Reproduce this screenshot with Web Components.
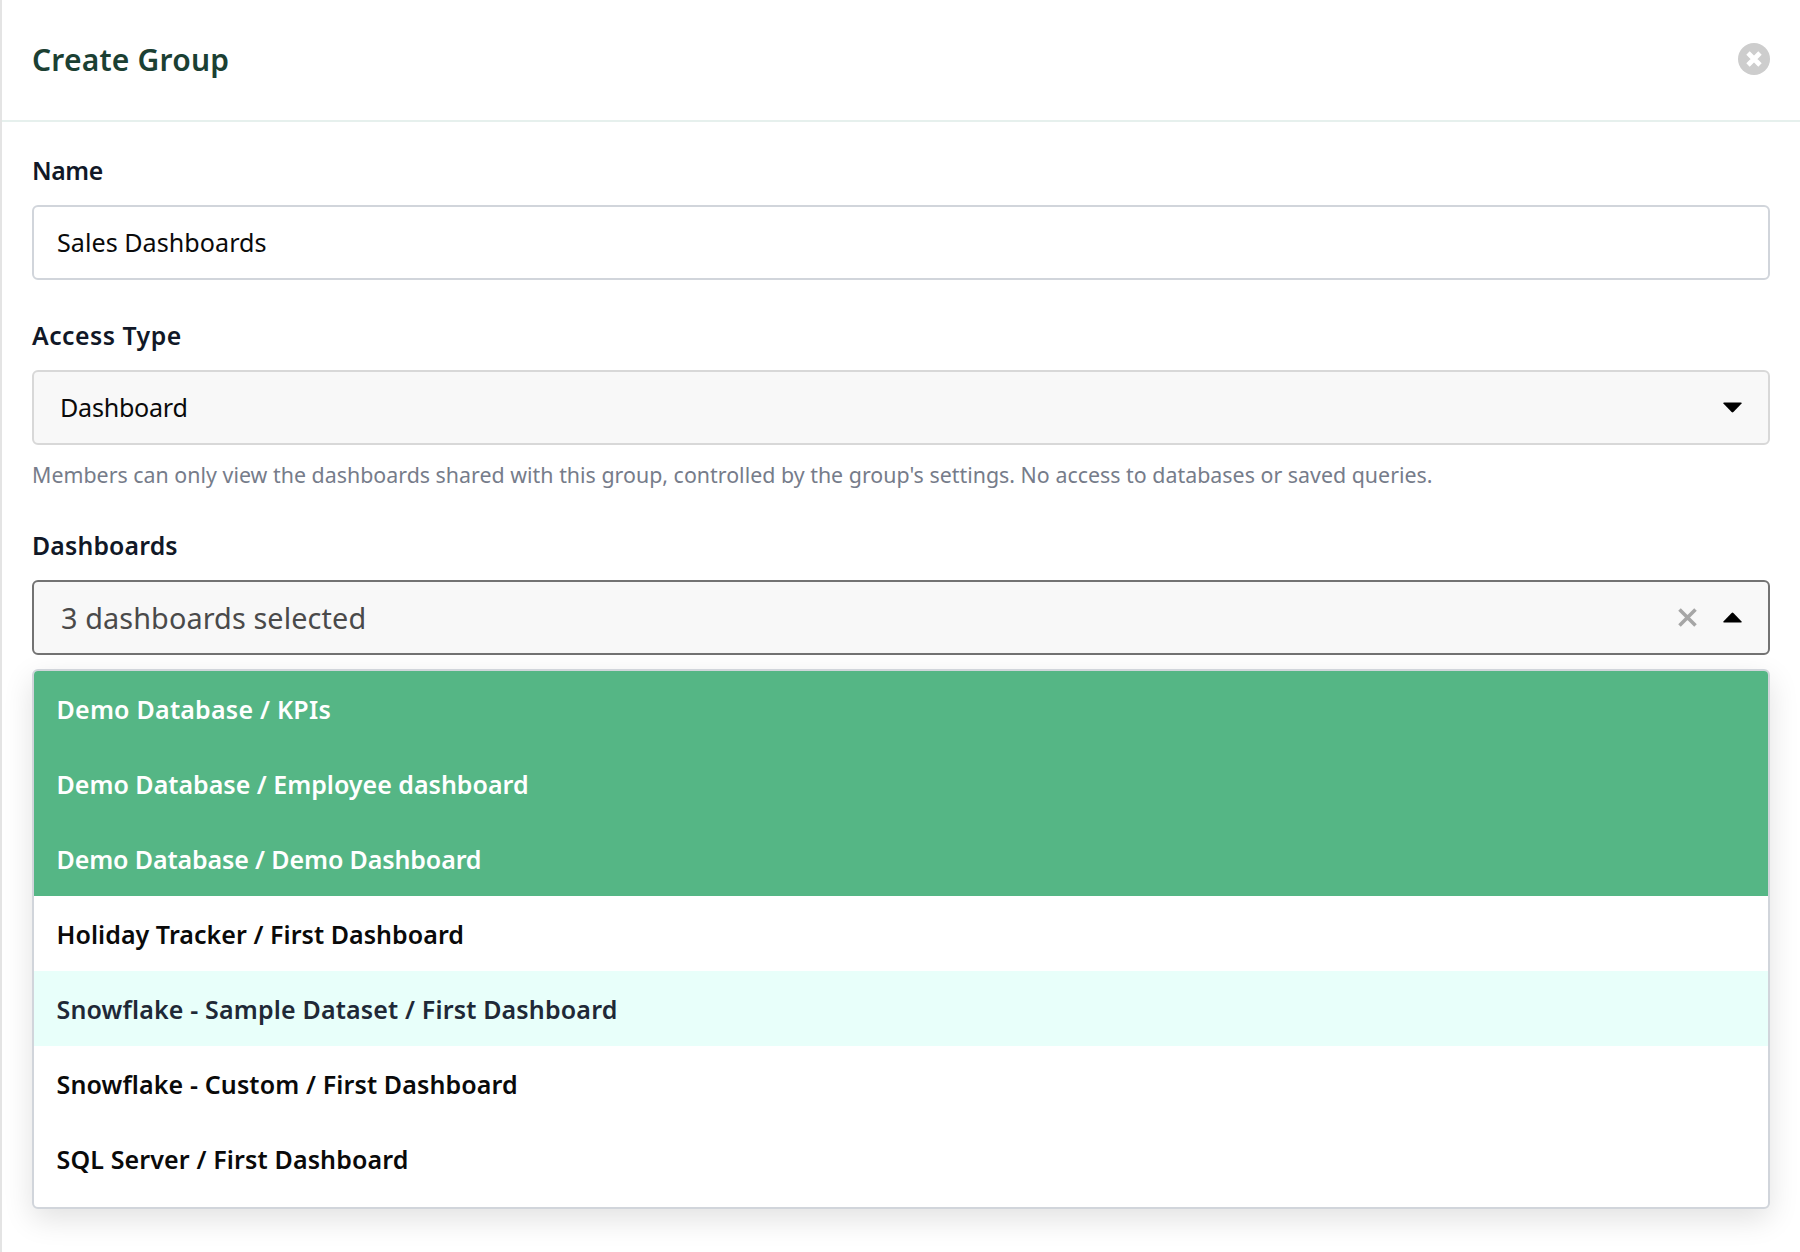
<!DOCTYPE html>
<html>
<head>
<meta charset="utf-8">
<title>Create Group</title>
<style>
  html, body { margin: 0; background: #fff; }
  body { font-family: "Noto Sans", sans-serif; color: #111827; }
</style>
</head>
<body>
<group-panel>
  <panel-header slot="header">Create Group</panel-header>
  <form-field label="Name" tracking="-0.4px">
    <text-box>Sales Dashboards</text-box>
  </form-field>
  <form-field label="Access Type" tracking="0.5px" hint="Members can only view the dashboards shared with this group, controlled by the group's settings. No access to databases or saved queries.">
    <select-box>Dashboard</select-box>
  </form-field>
  <form-field label="Dashboards" tracking="0.17px">
    <select-box open clearable>3 dashboards selected</select-box>
    <option-list>
      <option-item selected style="letter-spacing: 0.23px">Demo Database / KPIs</option-item>
      <option-item selected style="letter-spacing: 0px">Demo Database / Employee dashboard</option-item>
      <option-item selected style="letter-spacing: -0.12px">Demo Database / Demo Dashboard</option-item>
      <option-item style="letter-spacing: 0.05px">Holiday Tracker / First Dashboard</option-item>
      <option-item hover style="letter-spacing: 0.16px">Snowflake - Sample Dataset / First Dashboard</option-item>
      <option-item style="letter-spacing: 0.13px">Snowflake - Custom / First Dashboard</option-item>
      <option-item style="letter-spacing: 0.14px">SQL Server / First Dashboard</option-item>
    </option-list>
  </form-field>
</group-panel>
<script>
class GroupPanel extends HTMLElement {
  constructor() {
    super();
    this.attachShadow({ mode: "open" });
    this.shadowRoot.innerHTML = `
      <style>
        :host {
          display: block;
          box-sizing: border-box;
          min-height: 1252px;
          border-left: 2px solid #e4e4e4;
        }
        .body {
          display: flex;
          flex-direction: column;
          gap: 41px;
          padding: 34px 30px 0;
        }
      </style>
      <slot name="header"></slot>
      <div class="body"><slot></slot></div>
    `;
  }
}

class PanelHeader extends HTMLElement {
  constructor() {
    super();
    this.attachShadow({ mode: "open" });
    this.shadowRoot.innerHTML = `
      <style>
        :host {
          display: flex;
          align-items: center;
          justify-content: space-between;
          box-sizing: border-box;
          height: 122px;
          padding: 0 30px 2px;
          border-bottom: 2px solid #e6f0ed;
          font-size: 30px;
          font-weight: 600;
          letter-spacing: 0.2px;
          color: #1b4033;
        }
        svg { display: block; }
      </style>
      <slot></slot>
      <svg width="32" height="32" viewBox="0 0 32 32" aria-hidden="true">
        <circle cx="16" cy="16" r="16" fill="#cdcdcd"/>
        <path d="M10 10l12 12M22 10L10 22" stroke="#fff" stroke-width="4.8"/>
      </svg>
    `;
  }
}

class FormField extends HTMLElement {
  constructor() {
    super();
    this.attachShadow({ mode: "open" });
  }

  connectedCallback() {
    const hint = this.getAttribute("hint");
    this.shadowRoot.innerHTML = `
      <style>
        :host { display: block; }
        .label {
          height: 30px;
          line-height: 28px;
          margin-bottom: 19px;
          font-size: 24.8px;
          font-weight: 600;
          letter-spacing: ${this.getAttribute("tracking") || "0"};
          color: #111827;
        }
        .hint {
          height: 30px;
          line-height: 30px;
          margin-top: 15px;
          font-size: 21.37px;
          letter-spacing: 0.017px;
          color: #767c8a;
          white-space: nowrap;
        }
      </style>
      <div class="label">${this.getAttribute("label")}</div>
      <slot></slot>
      ${hint ? `<div class="hint">${hint}</div>` : ""}
    `;
  }
}

class TextBox extends HTMLElement {
  constructor() {
    super();
    this.attachShadow({ mode: "open" });
    this.shadowRoot.innerHTML = `
      <style>
        :host {
          display: flex;
          align-items: center;
          box-sizing: border-box;
          height: 75px;
          padding: 0 23px 2px;
          background: #fff;
          border: 2px solid #d1d5db;
          border-radius: 6px;
          font-size: 25.1px;
          letter-spacing: 0.04px;
          color: #0a0a0a;
        }
      </style>
      <slot></slot>
    `;
  }
}

class SelectBox extends HTMLElement {
  constructor() {
    super();
    this.attachShadow({ mode: "open" });
  }

  connectedCallback() {
    const open = this.hasAttribute("open");
    const caret = open
      ? "M8.6 .9Q9.5 0 10.4 .9L18.6 9.6Q19.2 10.5 18 10.5H1Q-.2 10.5 .4 9.6Z"
      : "M8.6 10.1Q9.5 11 10.4 10.1L18.6 1.4Q19.2 .5 18 .5H1Q-.2 .5 .4 1.4Z";
    const clear = this.hasAttribute("clearable")
      ? `<svg class="clear" width="19" height="19" viewBox="0 0 19 19" aria-hidden="true">
           <path d="M1.5 1.5l16 16M17.5 1.5l-16 16" stroke="#a6a6a6" stroke-width="3.6" fill="none"/>
         </svg>`
      : "";
    this.shadowRoot.innerHTML = `
      <style>
        :host {
          display: flex;
          align-items: center;
          box-sizing: border-box;
          height: 75px;
          padding: 0 26px 0 ${open ? "27px" : "26px"};
          background: #f8f8f8;
          border: 2px solid ${open ? "#737373" : "#d8d8d8"};
          border-radius: 6px;
          font-size: ${open ? "28.81px" : "25.1px"};
          color: ${open ? "#4a4a4a" : "#0a0a0a"};
        }
        .text {
          flex: 1;
          letter-spacing: ${open ? "0.11px" : "-0.25px"};
          padding-bottom: ${open ? "0" : "2px"};
        }
        svg { display: block; flex: none; }
        .clear { margin-right: 26px; }
      </style>
      <span class="text"><slot></slot></span>
      ${clear}
      <svg width="19" height="11" viewBox="0 0 19 11" aria-hidden="true"><path d="${caret}" fill="#000"/></svg>
    `;
  }
}

class OptionList extends HTMLElement {
  constructor() {
    super();
    this.attachShadow({ mode: "open" });
    this.shadowRoot.innerHTML = `
      <style>
        :host {
          display: block;
          box-sizing: border-box;
          margin-top: 14px;
          padding-bottom: 11px;
          background: #fff;
          border: 2px solid #d1d5db;
          border-radius: 6px;
          box-shadow: 0 10px 30px rgba(0, 0, 0, 0.12);
          overflow: hidden;
        }
      </style>
      <slot></slot>
    `;
  }
}

class OptionItem extends HTMLElement {
  constructor() {
    super();
    this.attachShadow({ mode: "open" });
    this.shadowRoot.innerHTML = `
      <style>
        :host {
          display: flex;
          align-items: center;
          box-sizing: border-box;
          height: 75px;
          padding: 0 22.5px;
          font-size: 25px;
          font-weight: 600;
          color: #0a0a0a;
        }
        :host([selected]) { background: #55b685; color: #fff; }
        :host([hover]) { background: #e8fffa; color: #1f2937; }
      </style>
      <slot></slot>
    `;
  }
}

customElements.define("group-panel", GroupPanel);
customElements.define("panel-header", PanelHeader);
customElements.define("form-field", FormField);
customElements.define("text-box", TextBox);
customElements.define("select-box", SelectBox);
customElements.define("option-list", OptionList);
customElements.define("option-item", OptionItem);
</script>
</body>
</html>
